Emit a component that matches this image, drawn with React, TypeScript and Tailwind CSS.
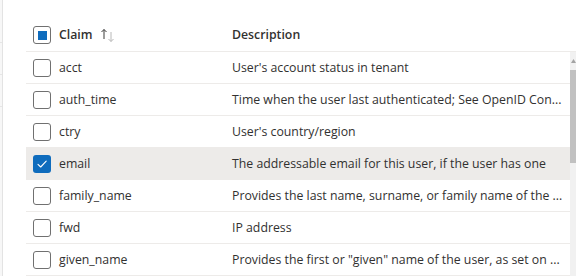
import React from "react";

interface ClaimRow {
  name: string;
  description: string;
  checked?: boolean;
}

// descriptions are shown as the portal cuts them
const rows: ClaimRow[] = [
  { name: "acct", description: "User's account status in tenant" },
  {
    name: "auth_time",
    description: "Time when the user last authenticated; See OpenID Con...",
  },
  { name: "ctry", description: "User's country/region" },
  {
    name: "email",
    description: "The addressable email for this user, if the user has one",
    checked: true,
  },
  {
    name: "family_name",
    description: "Provides the last name, surname, or family name of the ...",
  },
  { name: "fwd", description: "IP address" },
  {
    name: "given_name",
    description: 'Provides the first or "given" name of the user, as set on ...',
  },
];

const Checkbox = ({ state }: { state: "off" | "on" | "mixed" }) => {
  if (state === "on") {
    return (
      <div className="w-[18px] h-[18px] shrink-0 rounded-[3px] bg-[#0f6cbd] flex items-center justify-center">
        <svg width="12" height="12" viewBox="0 0 12 12" fill="none">
          <path
            d="M2 6.3 L4.7 9 L10.2 3.2"
            stroke="white"
            strokeWidth="1.1"
            strokeLinecap="round"
            strokeLinejoin="round"
          />
        </svg>
      </div>
    );
  }
  return (
    <div className="w-[18px] h-[18px] shrink-0 rounded-[3px] border border-[#707070] bg-white flex items-center justify-center">
      {state === "mixed" && <div className="w-[9px] h-[9px] bg-[#0f6cbd]" />}
    </div>
  );
};

const SortIcon = () => (
  <svg width="15" height="15" viewBox="0 0 15 15" fill="none">
    <path d="M3 11 V1.5 M0.5 4 L3 1.5 L5.5 4" stroke="#3b3a39" strokeWidth="1" />
    <path
      d="M10 4 V13.5 M7.5 11 L10 13.5 L12.5 11"
      stroke="#b8b8b8"
      strokeWidth="1"
    />
  </svg>
);

export default function App() {
  return (
    <div
      className="w-[576px] h-[276px] overflow-hidden bg-white flex text-[#323130] text-[12.3px]"
      style={{ fontFamily: '"Open Sans", "Noto Sans", sans-serif' }}
    >
      {/* neighbouring panel peeking in at the left edge */}
      <div className="w-[3px] shrink-0 bg-[#f7f7f7] border-r border-[#e3e3e3] flex flex-col">
        <div className="h-[43px] border-b border-[#e6e6e6]" />
        <div className="h-[32px] border-b border-[#e6e6e6]" />
        <div className="h-[32px] border-b border-[#e6e6e6]" />
      </div>

      <div className="flex-1 min-w-0 flex flex-col pl-[23px] pt-[19px]">
        {/* header */}
        <div className="h-[33px] shrink-0 flex items-center border-b border-[#edebe9]">
          <div className="w-[206px] shrink-0 flex items-center pl-[7px] gap-[8px]">
            <Checkbox state="mixed" />
            <span className="font-semibold pt-[1px]">Claim</span>
            <span className="flex items-center">
              <SortIcon />
            </span>
          </div>
          <div className="font-semibold pt-[1px]">Description</div>
        </div>

        {/* body */}
        <div className="flex-1 min-h-0 flex">
          <div className="flex-1 min-w-0 flex flex-col">
            {rows.map((row) => (
              <div
                key={row.name}
                className={`h-[32px] shrink-0 flex items-center border-b border-[#edebe9] ${
                  row.checked ? "bg-[#edebe9]" : "bg-white"
                }`}
              >
                <div className="w-[206px] shrink-0 flex items-center pl-[7px] gap-[8px]">
                  <Checkbox state={row.checked ? "on" : "off"} />
                  <span className="pt-[1px]">{row.name}</span>
                </div>
                <div className="flex-1 min-w-0 whitespace-nowrap pt-[1px]">
                  {row.description}
                </div>
              </div>
            ))}
          </div>

          {/* scrollbar */}
          <div className="w-[6px] shrink-0 bg-[#f1f1f1] flex flex-col">
            <div className="h-[18px] flex items-center justify-center">
              <svg width="5" height="4" viewBox="0 0 5 4">
                <path d="M0 4 L2.5 0 L5 4 Z" fill="#a3a3a3" />
              </svg>
            </div>
            <div className="h-[93px] bg-[#c1c1c1]" />
          </div>
        </div>
      </div>
    </div>
  );
}
